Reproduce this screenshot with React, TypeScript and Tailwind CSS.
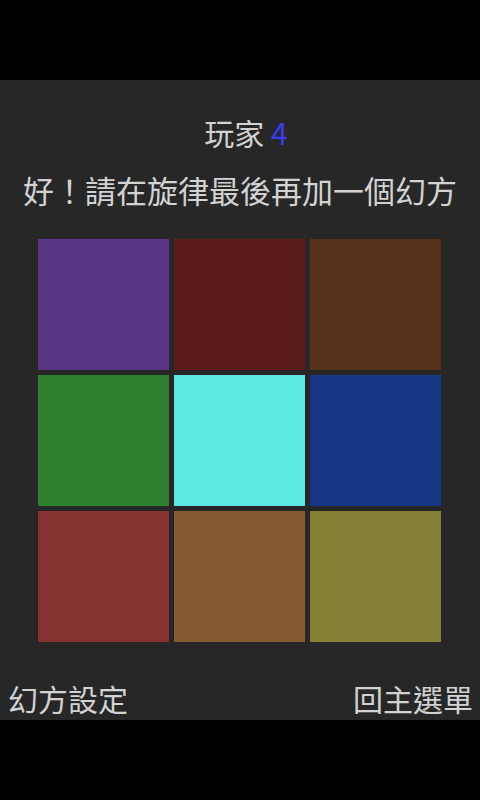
import React from 'react';

const CELLS = [
  'bg-[#5a3585]',
  'bg-[#5a1b1b]',
  'bg-[#553219]',
  'bg-[#2f7f31]',
  'bg-[#5ce9e3]',
  'bg-[#163582]',
  'bg-[#843331]',
  'bg-[#855b33]',
  'bg-[#838034]',
];

export default function App() {
  return (
    <div
      className="w-[480px] h-[800px] bg-black flex flex-col overflow-hidden"
      style={{ fontFamily: '"Noto Sans CJK TC", "Noto Sans", sans-serif' }}
    >
      <div className="h-[80px] shrink-0 bg-black" />

      <main className="h-[640px] shrink-0 bg-[#272727] flex flex-col items-center pt-[35px] text-[#d2d2d2]">
        {/* Player title */}
        <h1 className="text-[30px] leading-[34px] font-normal ml-[12px]">
          玩家 <span className="text-[#3b3bf5]">4</span>
        </h1>

        {/* Prompt */}
        <p className="mt-[24px] text-[31px] leading-[34px] whitespace-nowrap">
          好！請在旋律最後再加一個幻方
        </p>

        {/* Colour grid */}
        <div className="mt-[32px] grid grid-cols-[repeat(3,131px)] grid-rows-[repeat(3,131px)] gap-[5px] ml-[-1px]">
          {CELLS.map((c, i) => (
            <button key={i} className={`${c} w-[131px] h-[131px]`} />
          ))}
        </div>

        <div className="flex-1" />

        {/* Bottom actions */}
        <div className="w-full flex justify-between pl-[8px] pr-[7px] pb-[4px] text-[30px] leading-[36px]">
          <span>幻方設定</span>
          <span>回主選單</span>
        </div>
      </main>

      <div className="h-[80px] shrink-0 bg-black" />
    </div>
  );
}
